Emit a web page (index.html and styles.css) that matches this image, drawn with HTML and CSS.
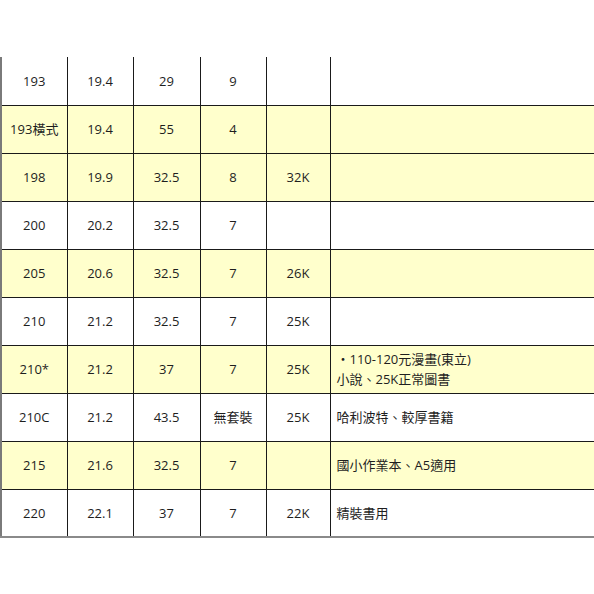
FILE: index.html
```html
<!DOCTYPE html>
<html lang="zh-Hant">
<head>
<meta charset="utf-8">
<title>書套尺寸表</title>
<link rel="stylesheet" href="styles.css">
</head>
<body>
<table class="sizes">
  <colgroup>
    <col class="c1"><col class="c2"><col class="c3"><col class="c4"><col class="c5"><col class="c6">
  </colgroup>
  <tbody>
    <tr class="first"><td>193</td><td>19.4</td><td>29</td><td>9</td><td></td><td class="note"></td></tr>
    <tr class="hl"><td>193橫式</td><td>19.4</td><td>55</td><td>4</td><td></td><td class="note"></td></tr>
    <tr class="hl"><td>198</td><td>19.9</td><td>32.5</td><td>8</td><td>32K</td><td class="note"></td></tr>
    <tr><td>200</td><td>20.2</td><td>32.5</td><td>7</td><td></td><td class="note"></td></tr>
    <tr class="hl"><td>205</td><td>20.6</td><td>32.5</td><td>7</td><td>26K</td><td class="note"></td></tr>
    <tr><td>210</td><td>21.2</td><td>32.5</td><td>7</td><td>25K</td><td class="note"></td></tr>
    <tr class="hl"><td>210*</td><td>21.2</td><td>37</td><td>7</td><td>25K</td><td class="note">・110-120元漫畫(東立)<br>小說、25K正常圖書</td></tr>
    <tr><td>210C</td><td>21.2</td><td>43.5</td><td>無套裝</td><td>25K</td><td class="note">哈利波特、較厚書籍</td></tr>
    <tr class="hl"><td>215</td><td>21.6</td><td>32.5</td><td>7</td><td></td><td class="note">國小作業本、A5適用</td></tr>
    <tr class="last"><td>220</td><td>22.1</td><td>37</td><td>7</td><td>22K</td><td class="note">精裝書用</td></tr>
  </tbody>
</table>
</body>
</html>
```
FILE: styles.css
```css
html, body {
  margin: 0;
  padding: 0;
  background: #ffffff;
}
body {
  padding-top: 57px;
  font-family: "Open Sans", "Noto Sans CJK TC", sans-serif;
  font-size: 13px;
  color: #1e1e1e;
}
.sizes {
  width: 594px;
  table-layout: fixed;
  border-collapse: collapse;
  border-left: 2px solid #7a7a7a;
  border-right: 2px solid #9a9a9a;
  border-bottom: 2px solid #8a8a8a;
}
.c1 { width: 66px; }
.c2 { width: 66px; }
.c3 { width: 67px; }
.c4 { width: 66px; }
.c5 { width: 64px; }
.c6 { width: 265px; }
.sizes tr {
  height: 48px;
}
.sizes td {
  border: 1px solid #1a1a1a;
  text-align: center;
  vertical-align: middle;
  padding: 0;
  line-height: 20px;
  white-space: nowrap;
}
.sizes tr.first td {
  border-top: none;
  height: 46px;
}
.sizes tr.last td {
  border-bottom: 2px solid #8a8a8a;
}
.sizes td:first-child {
  border-left: 2px solid #7a7a7a;
}
.sizes td.note {
  text-align: left;
  padding-left: 6px;
  border-left: 1px solid #555;
  border-right: 2px solid #9a9a9a;
}
.sizes tr.hl td {
  background: #ffffcc;
}
```
